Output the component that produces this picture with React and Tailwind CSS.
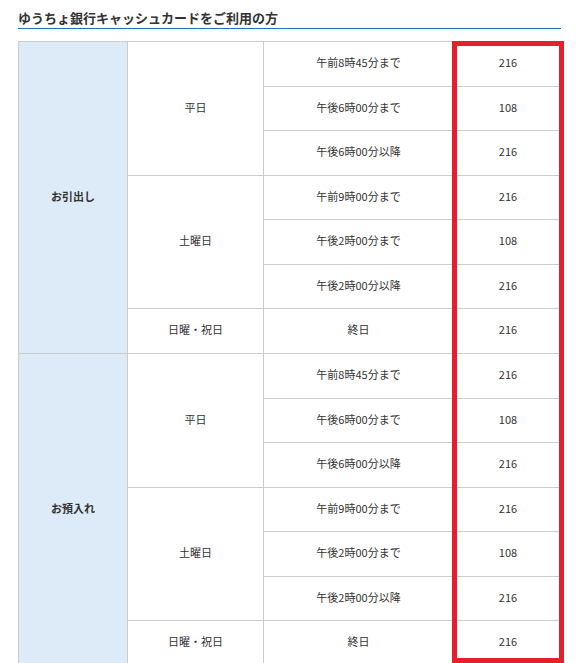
import React from 'react';

const rows = [
  { time: '午前8時45分まで', fee: '216' },
  { time: '午後6時00分まで', fee: '108' },
  { time: '午後6時00分以降', fee: '216' },
  { time: '午前9時00分まで', fee: '216' },
  { time: '午後2時00分まで', fee: '108' },
  { time: '午後2時00分以降', fee: '216' },
  { time: '終日', fee: '216' },
];

const cell = 'border border-[#cccccc] text-center pb-[3px]';

function Section({ label }) {
  return (
    <>
      {rows.map((r, i) => (
        <tr key={i} className={i % 2 === 0 ? 'h-[45px]' : 'h-[44px]'}>
          {i === 0 && (
            <td rowSpan={7} className={`${cell} bg-[#ddebf8] font-bold`}>
              {label}
            </td>
          )}
          {i === 0 && <td rowSpan={3} className={cell}>平日</td>}
          {i === 3 && <td rowSpan={3} className={cell}>土曜日</td>}
          {i === 6 && <td className={cell}>日曜・祝日</td>}
          <td className={cell}>{r.time}</td>
          <td className={cell}>{r.fee}</td>
        </tr>
      ))}
    </>
  );
}

export default function App() {
  return (
    <div
      className="relative w-[580px] h-[663px] overflow-hidden bg-white text-[#333333]"
      style={{ fontFamily: '"Noto Sans CJK JP", "Noto Sans", sans-serif' }}
    >
      <div className="ml-[18px] w-[543px] pt-[9px] pb-[1px] border-b border-[#1e73be]">
        <h2 className="text-[13px] leading-[18px] font-bold">ゆうちょ銀行キャッシュカードをご利用の方</h2>
      </div>

      <table className="ml-[18px] mt-[12px] w-[544px] table-fixed border-collapse text-[11px]">
        <colgroup>
          <col className="w-[109px]" />
          <col className="w-[136px]" />
          <col className="w-[190px]" />
          <col className="w-[109px]" />
        </colgroup>
        <tbody>
          <Section label="お引出し" />
          <Section label="お預入れ" />
        </tbody>
      </table>

      {/* highlight box */}
      <div className="absolute left-[452px] top-[41px] w-[112px] h-[622px] border-[5px] border-[#e5202a]" />
    </div>
  );
}
